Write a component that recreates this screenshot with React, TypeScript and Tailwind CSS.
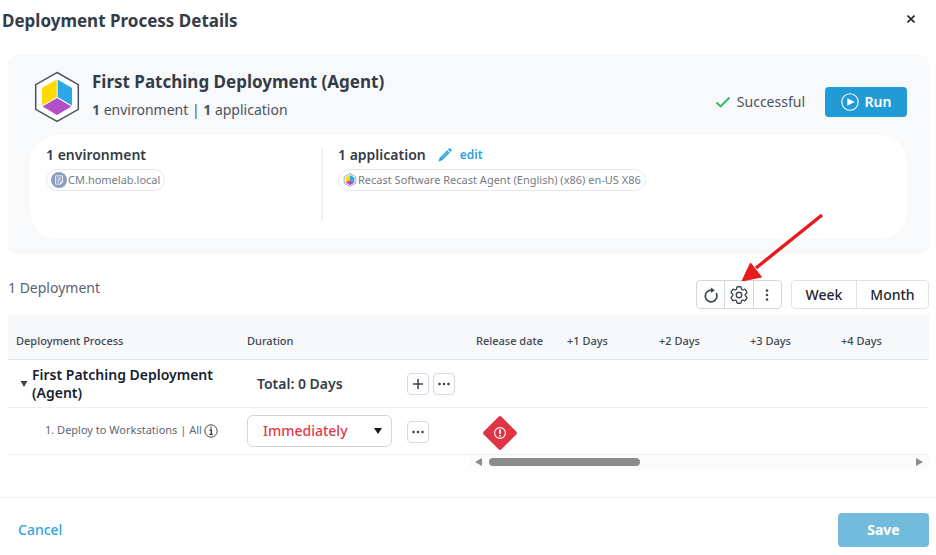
import { useState } from "react";
import type { ReactNode } from "react";
import { HiOutlineCog6Tooth } from "react-icons/hi2";

const DAY_COLUMNS = ["Release date", "+1 Days", "+2 Days", "+3 Days", "+4 Days"];

function RecastLogo({ className }: { className: string }) {
  return (
    <svg viewBox="0 0 46 52" className={className} aria-hidden="true">
      <path
        d="M23 1.5 44.3 13.7V38.3L23 50.5 1.7 38.3V13.7Z"
        fill="#fff"
        stroke="#4b525c"
        strokeWidth="1.5"
      />
      <path d="M22.6 8.5V26L8 34.5V17Z" fill="#ffd900" />
      <path d="M23.6 8.5V26L38 34.5V17Z" fill="#2aa8e8" />
      <path d="M23 27 37.5 35.5 23 44 8.5 35.5Z" fill="#b04fc8" />
    </svg>
  );
}

// Rounder cube, used at chip size where the full outline would swallow the colours
function RecastCube({ className }: { className: string }) {
  return (
    <svg viewBox="0 0 14 14" className={className} aria-hidden="true">
      <path
        d="M7 .6 12.8 3.8V10.2L7 13.4 1.2 10.2V3.8Z"
        fill="#fff"
        stroke="#a9aeb6"
        strokeWidth="1"
        strokeLinejoin="round"
      />
      <path d="M7 2v5L2.6 9.6v-5Z" fill="#ffd900" />
      <path d="M7 2v5l4.4 2.6v-5Z" fill="#2aa8e8" />
      <path d="M7 7l4.4 2.6L7 12.2 2.6 9.6Z" fill="#b04fc8" />
    </svg>
  );
}

function Dots({ vertical = false }: { vertical?: boolean }) {
  return (
    <svg
      viewBox="0 0 14 14"
      className={vertical ? "size-3.5 rotate-90" : "size-3.5"}
      fill="currentColor"
      aria-hidden="true"
    >
      <circle cx="2.5" cy="7" r="1.3" />
      <circle cx="7" cy="7" r="1.3" />
      <circle cx="11.5" cy="7" r="1.3" />
    </svg>
  );
}

function SquareButton({ label, children }: { label: string; children: ReactNode }) {
  return (
    <button
      type="button"
      aria-label={label}
      className="flex size-[22px] items-center justify-center rounded border border-[#d5d8dd] bg-white text-[#3b4450]"
    >
      {children}
    </button>
  );
}

function ToolButton({ label, children }: { label: string; children: ReactNode }) {
  return (
    <button
      type="button"
      aria-label={label}
      className="flex flex-1 items-center justify-center text-[#3f4752]"
    >
      {children}
    </button>
  );
}

function Chip({ children }: { children: ReactNode }) {
  return (
    <span className="mt-0.5 inline-flex h-[22px] items-center rounded-full border border-[#e6e7ea] px-1 text-[11px] text-[#767c86]">
      {children}
    </span>
  );
}

function SummaryCard() {
  return (
    <section className="mr-[7px] ml-2 rounded-lg bg-[#f8f9fb] px-[22px] pt-3 pb-[15px]">
      <div className="flex h-[68px] items-start">
        <RecastLogo className="mt-1 ml-1 h-[52px] w-[46px]" />
        <div className="mt-px ml-3 flex-1">
          <h2 className="text-[17px] leading-7 font-bold text-[#343c47]">
            First Patching Deployment (Agent)
          </h2>
          <p className="text-sm leading-7 text-[#4b535e]">
            <b className="font-bold">1</b> environment | <b className="font-bold">1</b>{" "}
            application
          </p>
        </div>
        <div className="mt-5 flex items-center">
          <svg viewBox="0 0 16 12" className="h-3 w-4" fill="none" aria-hidden="true">
            <path d="M1.5 6.5 5.5 10.5 14.5 1.5" stroke="#27bd58" strokeWidth="1.8" />
          </svg>
          <span className="ml-1.5 text-sm text-[#4b535e]">Successful</span>
          <button
            type="button"
            className="ml-5 flex h-[30px] w-[82px] items-center justify-center gap-1.5 rounded bg-[#219ad6] text-sm font-semibold text-white"
          >
            <svg viewBox="0 0 18 18" className="size-[18px]" fill="none" aria-hidden="true">
              <circle cx="9" cy="9" r="8.2" stroke="#fff" strokeWidth="1.1" />
              <path d="M6.3 5.3 13.7 9 6.3 12.7Z" fill="#fff" />
            </svg>
            Run
          </button>
        </div>
      </div>

      <div className="flex min-h-[104px] rounded-[28px] bg-white px-4 pt-2 pb-3">
        <div className="my-1.5 w-[277px] border-r-2 border-[#eff0f3]">
          <h3 className="-mt-1.5 text-sm leading-6 font-semibold text-[#343c47]">
            1 environment
          </h3>
          <Chip>
            <svg viewBox="0 0 16 16" className="mr-px size-4" fill="none" aria-hidden="true">
              <circle cx="8" cy="8" r="8" fill="#8c9dc2" />
              <path
                d="M4.6 3.8h7v6.4l-2 2h-5zM6.3 6h3.7M6.3 8h3.7M6.3 10h1.7M9.5 12v-2h2"
                stroke="#fff"
                strokeWidth=".8"
              />
            </svg>
            CM.homelab.local
          </Chip>
        </div>
        <div className="ml-[15px] flex-1">
          <div className="flex h-6 items-center">
            <h3 className="text-sm font-semibold text-[#343c47]">1 application</h3>
            <a
              href="#edit"
              className="ml-3 flex items-center gap-2 text-xs font-semibold text-[#2fa4dc]"
            >
              <svg viewBox="0 0 14 14" className="size-3.5" fill="currentColor" aria-hidden="true">
                <path d="M9.2 2.3 11.7 4.8 4.2 12.3 0.5 13.5 1.7 9.8ZM10 1.5 10.9 0.6a1 1 0 0 1 1.4 0L13.4 1.7a1 1 0 0 1 0 1.4L12.5 4Z" />
                <path d="M3.4 10.2 9.4 4.2" stroke="#fff" strokeWidth=".5" />
              </svg>
              edit
            </a>
          </div>
          <Chip>
            <RecastCube className="mr-px size-3.5" />
            Recast Software Recast Agent (English) (x86) en-US X86
          </Chip>
        </div>
      </div>
    </section>
  );
}

function Toolbar() {
  return (
    <div className="mt-[26px] mr-[7px] ml-2 flex h-[29px] items-center">
      <p className="-mt-3.5 flex-1 text-sm text-[#5a626d]">1 Deployment</p>
      <div className="relative flex h-[29px] w-[86px] rounded border border-[#cfd6de] bg-white">
        <div className="flex flex-1 divide-x divide-[#d0d7de]">
          <ToolButton label="Refresh">
            <svg
              viewBox="0 0 16 16"
              className="size-4"
              fill="none"
              stroke="currentColor"
              strokeWidth="1.7"
              aria-hidden="true"
            >
              <path d="M13.2 6.2A5.8 5.8 0 1 1 8 3.2h1.5" />
              <path d="M8 .4 11.8 3.2 8 6Z" fill="currentColor" stroke="none" />
            </svg>
          </ToolButton>
          <ToolButton label="Settings">
            <HiOutlineCog6Tooth className="size-[22px] shrink-0" aria-hidden="true" />
          </ToolButton>
          <ToolButton label="More options">
            <Dots vertical />
          </ToolButton>
        </div>
        <svg
          viewBox="0 0 84 70"
          className="pointer-events-none absolute bottom-full left-[44px] h-[70px] w-[84px]"
          aria-hidden="true"
        >
          <path d="M81 4 15 57" stroke="#e8191c" strokeWidth="3.4" />
          <path d="M1 70 9.5 52 20.5 66Z" fill="#e8191c" stroke="#e8191c" strokeWidth="1" />
        </svg>
      </div>
      <div className="ml-[9px] flex h-[29px] w-[138px] divide-x divide-[#e0e3e8] rounded border border-[#dfe3e8] bg-white text-sm font-medium text-[#1f2633]">
        <button type="button" className="w-[65px]">
          Week
        </button>
        <button type="button" className="flex-1">
          Month
        </button>
      </div>
    </div>
  );
}

function DeploymentTable() {
  const [expanded, setExpanded] = useState(true);
  const [duration, setDuration] = useState("immediately");

  return (
    <div className="mt-[5px] mr-[7px] ml-2">
      <table className="w-full table-fixed border-collapse text-left">
        <colgroup>
          <col className="w-[231px]" />
          <col className="w-[160px]" />
          <col className="w-[69px]" />
          <col className="w-[91px]" />
          <col className="w-[92px]" />
          <col className="w-[91px]" />
          <col className="w-[91px]" />
          <col />
        </colgroup>
        <thead>
          <tr className="h-[45px] border-b border-[#e1e4e8] bg-[#f7f8fa] text-[11px] text-[#3f4752]">
            <th className="px-2 pt-2.5 font-medium">Deployment Process</th>
            <th className="px-2 pt-2.5 font-medium" colSpan={2}>
              Duration
            </th>
            {DAY_COLUMNS.map((day) => (
              <th key={day} className="px-2 pt-2.5 font-medium whitespace-nowrap">
                {day}
              </th>
            ))}
          </tr>
        </thead>
        <tbody>
          <tr className="h-12 border-b border-[#eceef0]">
            <td className="pt-0.5 pl-2">
              <div className="flex items-center">
                <button
                  type="button"
                  aria-label="Toggle deployment"
                  aria-expanded={expanded}
                  onClick={() => setExpanded(!expanded)}
                  className="flex w-4 shrink-0 justify-center text-[#3b4450]"
                >
                  <svg viewBox="0 0 8 6" className="h-1.5 w-2" fill="currentColor" aria-hidden="true">
                    <path d="M.5 0h7L4 6Z" />
                  </svg>
                </button>
                <span className="text-sm leading-[18px] font-semibold text-[#151d30]">
                  First Patching Deployment (Agent)
                </span>
              </div>
            </td>
            <td className="pt-0.5 pl-[18px] text-sm font-semibold text-[#343c47]">
              Total: 0 Days
            </td>
            <td className="pt-0.5 pl-2">
              <div className="flex gap-1">
                <SquareButton label="Add step">
                  <svg
                    viewBox="0 0 10 10"
                    className="size-2.5"
                    stroke="currentColor"
                    strokeWidth="1.5"
                    aria-hidden="true"
                  >
                    <path d="M5 0v10M0 5h10" />
                  </svg>
                </SquareButton>
                <SquareButton label="Deployment options">
                  <Dots />
                </SquareButton>
              </div>
            </td>
            <td colSpan={5} />
          </tr>
          {expanded && (
            <tr className="h-[47px] border-b border-[#eceef0]">
              <td className="pl-[37px] text-[11px] whitespace-nowrap text-[#5f6672]">
                <div className="flex items-center gap-0.5">
                  1. Deploy to Workstations | All
                  <svg
                    viewBox="0 0 14 14"
                    className="size-3.5"
                    fill="none"
                    stroke="#3b4450"
                    aria-hidden="true"
                  >
                    <circle cx="7" cy="7" r="6.2" />
                    <path d="M7 2.8v1.7M5.5 6h1.8v4.2M5.3 10.4h3.6" strokeWidth="1.4" />
                  </svg>
                </div>
              </td>
              <td className="px-2">
                <div className="relative">
                  <select
                    aria-label="Duration"
                    value={duration}
                    onChange={(e) => setDuration(e.target.value)}
                    className="block h-8 w-[145px] appearance-none rounded-md border border-[#cfd4dd] bg-white pl-[15px] text-sm font-medium text-[#e03a4c]"
                  >
                    <option value="immediately">Immediately</option>
                    <option value="days">After days</option>
                  </select>
                  <svg
                    viewBox="0 0 8 6"
                    className="pointer-events-none absolute top-[13px] right-[9px] h-1.5 w-2"
                    fill="#151b26"
                    aria-hidden="true"
                  >
                    <path d="M0 0h8L4 6Z" />
                  </svg>
                </div>
              </td>
              <td className="pt-0.5 pl-2">
                <SquareButton label="Step options">
                  <Dots />
                </SquareButton>
              </td>
              <td colSpan={5} className="pl-3.5">
                <svg
                  viewBox="0 0 36 36"
                  className="mt-1 size-9"
                  fill="none"
                  role="img"
                  aria-label="Release"
                >
                  <rect
                    x="5.5"
                    y="5.5"
                    width="25"
                    height="25"
                    rx="2"
                    fill="#de3444"
                    transform="rotate(45 18 18)"
                  />
                  <circle cx="18" cy="18" r="5.4" stroke="#fff" strokeWidth="1.1" />
                  <path d="M18 14.5v4.6M18 20v1.5" stroke="#fff" strokeWidth="1.8" />
                </svg>
              </td>
            </tr>
          )}
        </tbody>
      </table>
      <div className="ml-[461px] flex h-3.5 items-center bg-[#fbfbfb] px-1.5 text-[#8b8b8b]">
        <button type="button" aria-label="Scroll left">
          <svg viewBox="0 0 7 8" className="block h-2 w-[7px]" fill="currentColor" aria-hidden="true">
            <path d="M7 0v8L0 4Z" />
          </svg>
        </button>
        <div className="ml-[7px] h-2 w-[151px] rounded-full bg-[#8b8b8b]" />
        <button type="button" aria-label="Scroll right" className="ml-auto">
          <svg viewBox="0 0 7 8" className="block h-2 w-[7px]" fill="currentColor" aria-hidden="true">
            <path d="M0 0v8L7 4Z" />
          </svg>
        </button>
      </div>
    </div>
  );
}

export default function App() {
  return (
    <main className="bg-white font-['Noto_Sans','Open_Sans',sans-serif]">
      <header className="flex h-[55px] items-start justify-between pt-[7px] pr-[19px] pl-0.5">
        <h1 className="text-[17px] leading-7 font-bold text-[#343c47]">
          Deployment Process Details
        </h1>
        <button type="button" aria-label="Close" className="mt-1.5 p-0.5">
          <svg
            viewBox="0 0 8 8"
            className="size-2"
            stroke="#20262f"
            strokeWidth="1.6"
            aria-hidden="true"
          >
            <path d="M.5.5l7 7M7.5.5l-7 7" />
          </svg>
        </button>
      </header>

      <SummaryCard />
      <Toolbar />
      <DeploymentTable />

      <footer className="mt-7 flex items-center justify-between border-t border-[#eceef0] pt-[15px] pr-[7px] pb-2 pl-2">
        <button type="button" className="px-2.5 text-sm font-medium text-[#2fa4dc]">
          Cancel
        </button>
        <button
          type="button"
          className="h-[34px] w-[91px] rounded bg-[#73bbdd] text-sm font-bold text-white"
        >
          Save
        </button>
      </footer>
    </main>
  );
}
